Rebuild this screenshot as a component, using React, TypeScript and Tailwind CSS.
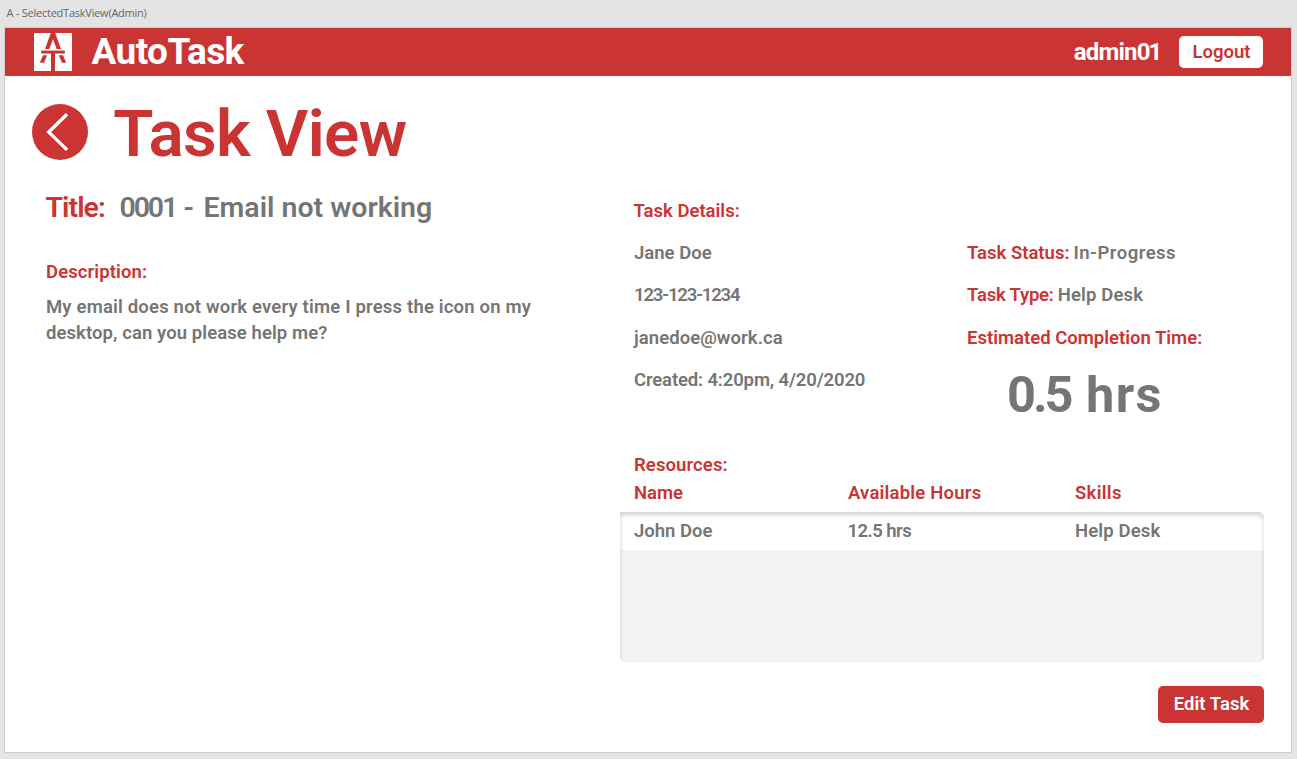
import React from "react";

function Logo() {
  return (
    <svg width="38" height="38" viewBox="0 0 38 38" className="shrink-0">
      <rect width="38" height="38" fill="#fff" />
      <g fill="#ca3433">
        <path d="M16.8 0H21.2L27 16H22.7L19 6.2L15.3 16H11Z" />
        <rect x="7.2" y="17.6" width="23.6" height="2.9" />
        <rect x="17" y="20" width="4" height="18" />
        <path d="M9 22.2H13.2L10 29.8H5.8Z" />
        <path d="M29 22.2H24.8L28 29.8H32.2Z" />
      </g>
    </svg>
  );
}

function BackButton() {
  return (
    <button className="-ml-[0.3px] flex size-[56.6px] shrink-0 items-center justify-center rounded-full bg-[#ca3433]" aria-label="Back">
      <svg width="57" height="57" viewBox="0 0 57 57" fill="none" stroke="#fff" strokeWidth="3.4">
        <path d="M35.3 10.2L16.9 28.1L35.3 46" />
      </svg>
    </button>
  );
}

const label = "text-[#ca3433]";

export default function App() {
  return (
    <div className="flex h-[759px] w-[1297px] flex-col overflow-hidden bg-[#e4e4e4] pl-1 font-['Roboto',sans-serif] text-[18.5px] leading-[26px] font-semibold whitespace-nowrap text-[#757575]">
      <div className="h-[27px] pl-[2.5px] font-['Open_Sans',sans-serif] text-[11px] leading-[26px] font-normal tracking-[-0.24px] text-[#666]">
        A - SelectedTaskView(Admin)
      </div>
      <div className="flex h-[726px] w-[1288px] flex-col border border-[#cfcfcf] bg-white">
        <header className="flex h-12 shrink-0 items-center bg-[#ca3433] pr-[28px] pl-[29px] text-white">
          <Logo />
          <span className="ml-[19.5px] text-[37px] leading-[46px] font-bold tracking-[-0.6px]">AutoTask</span>
          <span className="mr-[18.5px] ml-auto text-[24px] leading-[46px] font-bold">
            <span className="tracking-[-0.8px]">admin</span>
            <span className="tracking-[-1.9px]">01</span>
          </span>
          <button className="h-[32px] w-[84px] rounded-[5px] bg-white pl-px text-[#ca3433]">Logout</button>
        </header>

        <div className="flex h-[112px] items-center pl-[27px]">
          <BackButton />
          <h1 className={label + " mt-[3px] ml-[25px] text-[65.5px] leading-[72px] tracking-[-0.6px]"}>Task View</h1>
        </div>

        <main className="flex">
          <section className="w-[615px] pl-[41px]">
            <div className="mt-[2px] flex text-[28.5px] leading-[36px]">
              <span className={label + " -ml-[0.5px] w-[74px] tracking-[-0.95px]"}>Title:</span>
              <span className="w-[64px] tracking-[-2.1px]">0001</span>
              <span className="w-[20px]">-</span>
              <span>Email not working</span>
            </div>
            <h2 className={label + " mt-[33px] tracking-[0.1px]"}>Description:</h2>
            <p className="mt-[9px]">
              <span className="tracking-[0.18px]">My email does not work every time I press the icon on my</span>
              <br />
              <span className="tracking-[0.08px]">desktop, can you please help me?</span>
            </p>
          </section>

          <section className="flex w-[644px] flex-col pt-[10px]">
            <h2 className={label + " pl-[13.5px]"}>Task Details:</h2>
            <div className="mt-[16px] flex pl-[14px]">
              <div className="flex w-[333px] flex-col gap-[16.3px]">
                <span>Jane Doe</span>
                <span className="tracking-[-1.15px]">123-123-1234</span>
                <span className="tracking-[0.06px]">janedoe@work.ca</span>
                <span className="tracking-[-0.14px]">Created: 4:20pm, 4/20/2020</span>
              </div>
              <div className="flex flex-col gap-[16.3px]">
                <div className="flex gap-1">
                  <span className={label}>Task Status:</span>
                  <span className="tracking-[0.5px]">In-Progress</span>
                </div>
                <div className="flex gap-1">
                  <span className={label + " tracking-[-0.2px]"}>Task Type:</span>
                  <span className="tracking-[0.14px]">Help Desk</span>
                </div>
                <span className={label}>Estimated Completion Time:</span>
                <span className="flex pl-[40px] text-[50.5px] leading-[56px] font-bold">
                  <span className="w-[79px] tracking-[-3px]">0.5</span>
                  <span className="tracking-[1.4px]">hrs</span>
                </span>
              </div>
            </div>
            <h2 className={label + " mt-[29.2px] pl-[14px] tracking-[0.1px]"}>Resources:</h2>
            <div className={label + " mt-[2px] grid grid-cols-[214px_227px_1fr] pl-[14px]"}>
              <span>Name</span>
              <span className="tracking-[0.2px]">Available Hours</span>
              <span className="tracking-[0.3px]">Skills</span>
            </div>
            <div className="relative mt-[6px] h-[149.5px] overflow-hidden rounded-[5px] rounded-tl-none bg-[#f4f4f4]">
              <div className="grid h-[38px] grid-cols-[214px_227px_1fr] items-center bg-white pl-[14px]">
                <span>John Doe</span>
                <span className="-ml-[0.5px] tracking-[-0.55px]">12.5 hrs</span>
                <span className="tracking-[0.14px]">Help Desk</span>
              </div>
              <div className="pointer-events-none absolute inset-0 rounded-[5px] rounded-tl-none shadow-[inset_0_3px_5px_rgba(0,0,0,0.18)]" />
            </div>
            <button className="mt-[24px] ml-auto h-[37.5px] w-[106px] rounded-[5px] bg-[#ca3433] pl-px tracking-[0.05px] text-white">Edit Task</button>
          </section>
        </main>
      </div>
    </div>
  );
}
